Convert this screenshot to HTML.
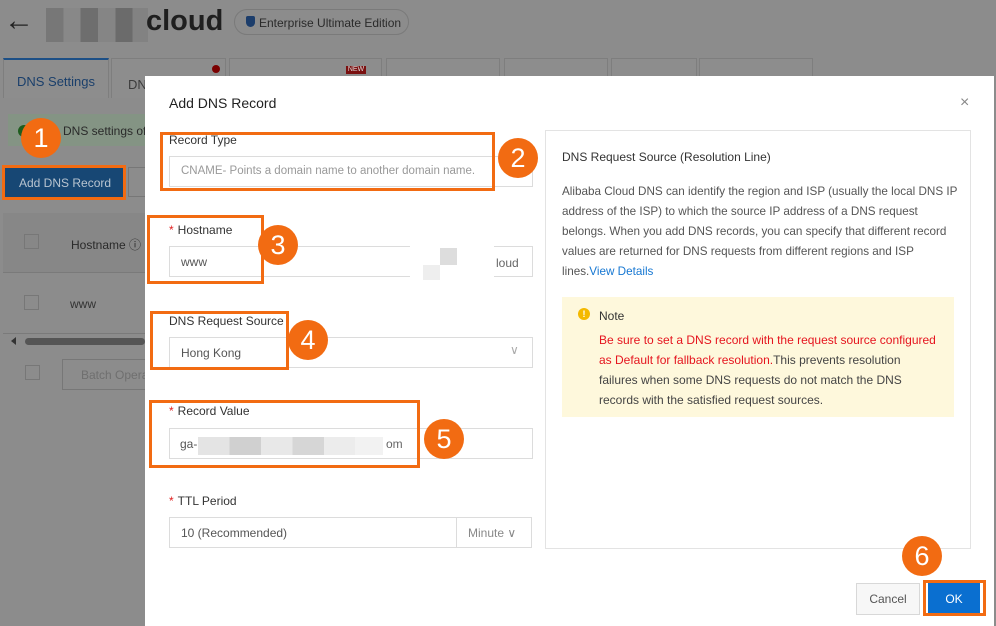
<!DOCTYPE html>
<html><head><style>
*{box-sizing:border-box;margin:0;padding:0}
body{width:996px;height:626px;overflow:hidden;font-family:"Liberation Sans",sans-serif;background:#8c8c8c;position:relative;font-size:12px;color:#333}
.a{position:absolute}
.tab{position:absolute;top:58px;height:40px;border:1px solid #7e7e7e;border-bottom:none;background:#8d8d8d;color:#3c3c3c;font-size:13px;padding:14px 0 0 0;text-align:center}
.inp{position:absolute;border:1px solid #dcdcdc;background:#fff;height:31px;color:#555;font-size:12px;padding:8px 0 0 11px}
.lbl{position:absolute;font-size:12px;color:#333}
.lbl b{color:#e02020;font-weight:normal;margin-right:4px}
.ob{position:absolute;border:3px solid #f26b12}
.c{position:absolute;width:40px;height:40px;border-radius:50%;background:#f26b12;color:#fff;font-size:27px;text-align:center;line-height:40px}
</style></head><body>
<div class="a" style="left:4px;top:4px;font-size:30px;color:#222">&#8592;</div>
<div class="a" style="left:46px;top:8px;width:102px;height:34px;background:linear-gradient(90deg,#777 0 17%,#888 17% 34%,#6e6e6e 34% 51%,#858585 51% 68%,#6b6b6b 68% 85%,#828282 85%)"></div>
<div class="a" style="left:146px;top:5px;font-size:29px;font-weight:bold;color:#1f1f1f">cloud</div>
<div class="a" style="left:234px;top:9px;width:175px;height:26px;border:1px solid #7a7a7a;border-radius:13px;font-size:12px;color:#2a2a2a;padding:6px 0 0 24px">Enterprise Ultimate Edition</div>
<div class="a" style="left:246px;top:16px;width:9px;height:11px;background:#1c3d6b;border-radius:2px 2px 5px 5px"></div>
<div class="tab" style="left:3px;width:106px;border-top:2px solid #1c4f86;color:#1a3f6b">DNS Settings</div>
<div class="tab" style="left:111px;width:115px;text-align:left;padding:18px 0 0 16px">DNS Protection</div>
<div class="a" style="left:212px;top:65px;width:8px;height:8px;border-radius:50%;background:#7a0000"></div>
<div class="tab" style="left:229px;width:153px;padding-top:19px">DNS Traffic Analysis</div>
<div class="a" style="left:346px;top:66px;width:20px;height:8px;background:#7a1010;color:#ddd;font-size:7px;line-height:8px;text-align:center">NEW</div>
<div class="tab" style="left:386px;width:114px;padding-top:19px">Weight Settings</div>
<div class="tab" style="left:504px;width:104px;padding-top:19px">Custom Line</div>
<div class="tab" style="left:611px;width:86px;padding-top:19px">DNS Log</div>
<div class="tab" style="left:699px;width:114px;padding-top:19px">Any Resolution</div>
<div class="a" style="left:8px;top:114px;width:140px;height:32px;background:#849484"></div>
<div class="a" style="left:18px;top:125px;width:12px;height:12px;border-radius:50%;background:#1e5d1e"></div>
<div class="a" style="left:63px;top:124px;color:#2a2a2a">DNS settings of</div>
<div class="a" style="left:5px;top:167px;width:118px;height:30px;background:#174774;color:#b8c4d0;font-size:12px;padding:9px 0 0 14px">Add DNS Record</div>
<div class="a" style="left:128px;top:167px;width:20px;height:30px;border:1px solid #777"></div>
<div class="a" style="left:3px;top:213px;width:142px;height:60px;background:#878787;border-bottom:1px solid #7a7a7a"></div>
<div class="a" style="left:24px;top:234px;width:15px;height:15px;border:1px solid #777"></div>
<div class="a" style="left:71px;top:236px;color:#2a2a2a">Hostname &#9432;</div>
<div class="a" style="left:24px;top:295px;width:15px;height:15px;border:1px solid #777"></div>
<div class="a" style="left:70px;top:297px;color:#333">www</div>
<div class="a" style="left:3px;top:333px;width:142px;border-top:1px solid #7a7a7a"></div>
<div class="a" style="left:25px;top:338px;width:120px;height:7px;border-radius:4px;background:#555"></div>
<div class="a" style="left:11px;top:337px;border:4px solid transparent;border-right:5px solid #333;border-left:none"></div>
<div class="a" style="left:25px;top:365px;width:15px;height:15px;border:1px solid #777"></div>
<div class="a" style="left:62px;top:359px;width:90px;height:31px;border:1px solid #777;color:#6f6f6f;padding:8px 0 0 18px">Batch Opera</div>

<div class="a" style="left:145px;top:76px;width:849px;height:550px;background:#fff"></div>
<div class="a" style="left:169px;top:95px;font-size:14px;color:#222">Add DNS Record</div>
<div class="a" style="left:960px;top:94px;font-size:16px;color:#888">&#215;</div>

<div class="lbl" style="left:169px;top:133px">Record Type</div>
<div class="inp" style="left:169px;top:156px;width:364px;color:#999;font-size:11.5px">CNAME- Points a domain name to another domain name.</div>
<div class="lbl" style="left:169px;top:223px"><b>*</b>Hostname</div>
<div class="inp" style="left:169px;top:246px;width:364px">www</div>
<div class="a" style="left:410px;top:232px;width:84px;height:48px;background:#fff"></div>
<div class="a" style="left:440px;top:248px;width:17px;height:17px;background:#ddd"></div>
<div class="a" style="left:423px;top:265px;width:17px;height:15px;background:#eee"></div>
<div class="a" style="left:496px;top:256px;color:#666">loud</div>
<div class="lbl" style="left:169px;top:314px">DNS Request Source</div>
<div class="inp" style="left:169px;top:337px;width:364px">Hong Kong</div>
<div class="a" style="left:510px;top:343px;color:#aaa;font-size:12px">&#8744;</div>
<div class="lbl" style="left:169px;top:404px"><b>*</b>Record Value</div>
<div class="inp" style="left:169px;top:428px;width:364px;padding-left:10px">ga-</div>
<div class="a" style="left:198px;top:437px;width:185px;height:18px;background:linear-gradient(90deg,#e4e4e4 0 17%,#d0d0d0 17% 34%,#e8e8e8 34% 51%,#d6d6d6 51% 68%,#ececec 68% 85%,#f2f2f2 85%)"></div>
<div class="a" style="left:386px;top:437px;color:#666">om</div>
<div class="lbl" style="left:169px;top:494px"><b>*</b>TTL Period</div>
<div class="inp" style="left:169px;top:517px;width:288px">10 (Recommended)</div>
<div class="inp" style="left:456px;top:517px;width:76px;color:#888">Minute &#8744;</div>

<div class="a" style="left:545px;top:130px;width:426px;height:419px;border:1px solid #e3e3e3"></div>
<div class="a" style="left:562px;top:150px;font-size:12px;color:#333">DNS Request Source (Resolution Line)</div>
<div class="a" style="left:562px;top:182px;width:400px;font-size:11.7px;line-height:20px;color:#555">Alibaba Cloud DNS can identify the region and ISP (usually the local DNS IP address of the ISP) to which the source IP address of a DNS request belongs. When you add DNS records, you can specify that different record values are returned for DNS requests from different regions and ISP lines.<span style="color:#1677d2">View Details</span></div>
<div class="a" style="left:562px;top:297px;width:392px;height:120px;background:#fef8dc"></div>
<div class="a" style="left:578px;top:308px;width:12px;height:12px;border-radius:50%;background:#f4b900;color:#fff;font-size:9px;text-align:center;line-height:12px;font-weight:bold">!</div>
<div class="a" style="left:599px;top:309px;font-size:12px;color:#333">Note</div>
<div class="a" style="left:599px;top:330px;width:342px;font-size:12px;line-height:20px;color:#444"><span style="color:#e5141e">Be sure to set a DNS record with the request source configured as Default for fallback resolution.</span>This prevents resolution failures when some DNS requests do not match the DNS records with the satisfied request sources.</div>

<div class="a" style="left:856px;top:583px;width:64px;height:32px;border:1px solid #d8d8d8;background:#f7f7f7;color:#555;text-align:center;line-height:30px">Cancel</div>
<div class="a" style="left:928px;top:583px;width:52px;height:32px;background:#0a6fd0;color:#fff;text-align:center;line-height:32px">OK</div>

<div class="ob" style="left:2px;top:165px;width:124px;height:35px"></div>
<div class="ob" style="left:160px;top:132px;width:335px;height:59px"></div>
<div class="ob" style="left:147px;top:215px;width:117px;height:69px"></div>
<div class="ob" style="left:150px;top:311px;width:139px;height:59px"></div>
<div class="ob" style="left:149px;top:400px;width:271px;height:68px"></div>
<div class="ob" style="left:923px;top:580px;width:63px;height:36px"></div>

<div class="c" style="left:21px;top:118px">1</div>
<div class="c" style="left:498px;top:138px">2</div>
<div class="c" style="left:258px;top:225px">3</div>
<div class="c" style="left:288px;top:320px">4</div>
<div class="c" style="left:424px;top:419px">5</div>
<div class="c" style="left:902px;top:536px">6</div>
</body></html>
